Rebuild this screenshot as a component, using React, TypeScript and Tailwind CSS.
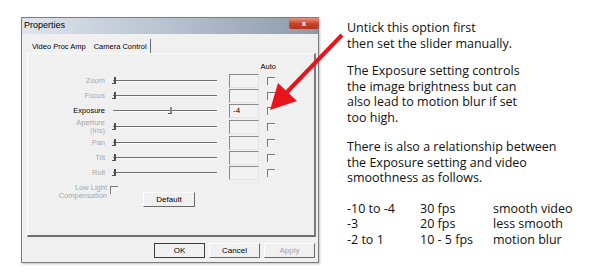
const rows = [
  { label: 'Zoom', pos: 0, value: '', active: false },
  { label: 'Focus', pos: 0, value: '', active: false },
  { label: 'Exposure', pos: 56, value: '-4', active: true },
  { label: 'Aperture', sub: '(Iris)', pos: 0, value: '', active: false },
  { label: 'Pan', pos: 0, value: '', active: false },
  { label: 'Tilt', pos: 0, value: '', active: false },
  { label: 'Roll', pos: 0, value: '', active: false },
];

function Check() {
  return <div className="w-[8px] h-[8px] border-t border-l border-t-[#7a7a7a] border-l-[#7a7a7a] bg-[#f3f3f3]" />;
}

function Slider({ pos, active }: { pos: number; active: boolean }) {
  return (
    <div className="relative w-[104px] h-[10px] flex items-center">
      <div className="w-full h-[2px] border-t border-t-[#6f6f6f] border-b border-b-[#fafafa]" />
      <div
        className={`absolute top-[1px] w-[2px] ${active ? 'h-[7px] bg-[#8a8a8a]' : 'h-[7px] bg-[#505050]'}`}
        style={{ left: pos + 1 }}
      />
      <div className="absolute top-[7px] w-[3px] h-[1px] bg-[#505050]" style={{ left: pos - 1 }} />
    </div>
  );
}

function Btn({ children, w = 'w-[51px]', disabled = false, def = false }: { children: string; w?: string; disabled?: boolean; def?: boolean }) {
  return (
    <div
      className={`${w} h-[15px] flex items-center justify-center text-[8px] bg-[#f0f0f0] border ${
        def ? 'border-[#3c3c3c]' : 'border-t-[#fcfcfc] border-l-[#fcfcfc] border-b-[#6a6a6a] border-r-[#6a6a6a]'
      } ${disabled ? 'text-[#a6a6a6]' : 'text-black'}`}
    >
      {children}
    </div>
  );
}

export default function App() {
  return (
    <div className="relative w-[600px] h-[280px] bg-white flex pl-[21px] pt-[17px] overflow-hidden" style={{ fontFamily: '"Liberation Sans", Arial, sans-serif' }}>
      {/* dialog */}
      <div className="w-[298px] h-[246px] flex flex-col border border-[#7c7c7c] bg-[#f0f0f0] shadow-[1px_1px_2px_rgba(0,0,0,0.25)]">
        <div className="h-[16px] flex items-center justify-between bg-gradient-to-r from-[#dfe5ec] via-[#b6c2cf] to-[#8d9aa9]">
          <span className="pl-[2px] text-[9px] text-black">Properties</span>
          <div className="w-[30px] h-[11px] self-start mr-[-1px] rounded-b-[3px] bg-gradient-to-b from-[#e5957c] via-[#c9462c] to-[#b0321c] flex items-center justify-center text-white text-[8px] font-bold leading-none">
            x
          </div>
        </div>
        <div className="flex-1 flex flex-col pl-[5px] pr-[2px] pt-[5px]">
          <div className="flex items-end h-[14px] text-[7.5px] text-black">
            <div className="pl-[5px] pr-[6px] pb-[1px]">Video Proc Amp</div>
            <div className="pl-[2px] pr-[3px] pb-[1px] h-[14px] flex items-end border-r border-r-[#6a6a6a]">Camera Control</div>
          </div>
          <div className="relative h-[184px] border-t border-t-[#fafafa] border-r-2 border-r-[#7a7a7a] border-b-2 border-b-[#6d6d6d] border-l border-l-[#fcfcfc] text-[7.5px]">
            <div className="flex justify-end pr-[38px] pt-[7px] h-[19px] text-black">Auto</div>
            <div className="flex flex-col">
              {rows.map((r) => (
                <div key={r.label} className={`flex items-center ${r.sub ? 'h-[17px]' : 'h-[15px]'}`}>
                  <div className={`w-[77px] text-right leading-[8px] ${r.active ? 'text-black' : 'text-[#a8a8a8]'}`}>
                    {r.label}
                    {r.sub && <div>{r.sub}</div>}
                  </div>
                  <div className="ml-[8px]">
                    <Slider pos={r.pos} active={r.active} />
                  </div>
                  <div className="ml-[12px] w-[30px] h-[14px] flex items-center pl-[3px] border-t border-l border-t-[#8a8a8a] border-l-[#8a8a8a] border-b border-r border-b-[#e4e4e4] border-r-[#e4e4e4] bg-[#f2f2f2] text-black text-[8px]">
                    {r.value}
                  </div>
                  <div className="ml-[8px]">
                    <Check />
                  </div>
                </div>
              ))}
            </div>
            <div className="flex items-start mt-[4px]">
              <div className="w-[79px] text-right leading-[8px] text-[#a8a8a8]">
                Low Light
                <div>Compensation</div>
              </div>
              <div className="ml-[3px] mt-[2px]">
                <Check />
              </div>
              <div className="ml-[25px] mt-[8px]">
                <Btn w="w-[52px]">Default</Btn>
              </div>
            </div>
          </div>
          <div className="flex justify-end gap-[4px] pt-[6px] pr-[1px]">
            <Btn def>OK</Btn>
            <Btn>Cancel</Btn>
            <Btn disabled>Apply</Btn>
          </div>
        </div>
      </div>

      {/* explanation */}
      <div className="ml-[28px] pt-[3px] text-[12.5px] leading-[15.5px] text-[#111]" style={{ fontFamily: '"Open Sans", sans-serif' }}>
        <p>
          Untick this option first
          <br />
          then set the slider manually.
        </p>
        <p className="mt-[12px]">
          The Exposure setting controls
          <br />
          the image brightness but can
          <br />
          also lead to motion blur if set
          <br />
          too high.
        </p>
        <p className="mt-[14px]">
          There is also a relationship between
          <br />
          the Exposure setting and video
          <br />
          smoothness as follows.
        </p>
        <div className="mt-[15px] grid grid-cols-[73px_73px_auto]">
          <span>-10 to -4</span>
          <span>30 fps</span>
          <span>smooth video</span>
          <span>-3</span>
          <span>20 fps</span>
          <span>less smooth</span>
          <span>-2 to 1</span>
          <span>10 - 5 fps</span>
          <span>motion blur</span>
        </div>
      </div>

      {/* red arrow */}
      <svg className="absolute left-0 top-0 pointer-events-none" width="600" height="280">
        <line x1="342" y1="35" x2="287" y2="92" stroke="#e8141b" strokeWidth="4" />
        <polygon points="270,110 278,83 297,101" fill="#e8141b" />
      </svg>
    </div>
  );
}
